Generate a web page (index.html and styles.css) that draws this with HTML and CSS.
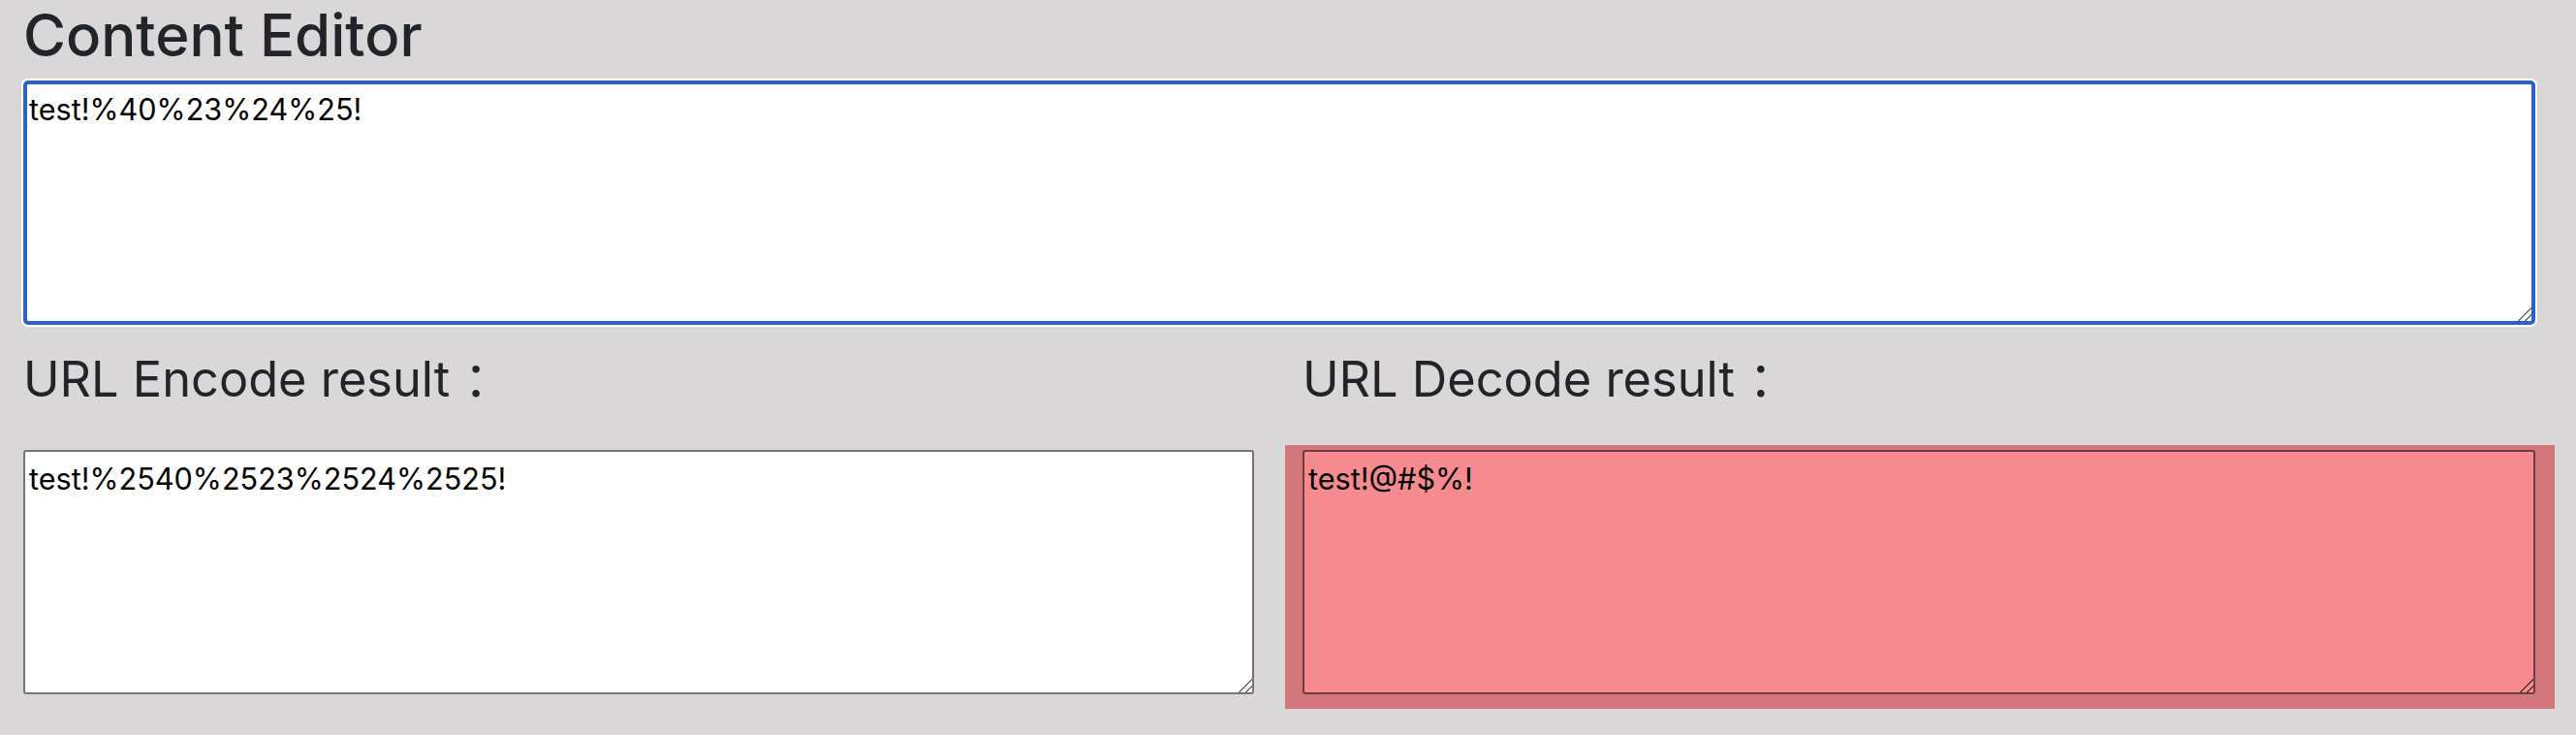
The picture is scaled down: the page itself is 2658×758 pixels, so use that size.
FILE: index.html
```html
<!DOCTYPE html>
<html lang="en">
<head>
<meta charset="utf-8">
<title>URL Encode / Decode</title>
<link rel="stylesheet" href="styles.css">
</head>
<body>
<main class="page">
  <h1 class="title">Content Editor</h1>
  <textarea class="editor editor-focus">test!%40%23%24%25!</textarea>
  <div class="results">
    <h2 class="result-title">URL Encode result ：</h2>
    <h2 class="result-title">URL Decode result ：</h2>
    <textarea class="editor">test!%2540%2523%2524%2525!</textarea>
    <div class="decode-box">
      <textarea class="editor editor-decode">test!@#$%!</textarea>
    </div>
  </div>
</main>
</body>
</html>
```

FILE: styles.css
```css
html, body {
  margin: 0;
  padding: 0;
  background: #d9d7d8;
}

.page {
  padding: 0 42px 0 24px;
  font-family: Inter, "Noto Sans CJK SC", sans-serif;
  color: #212529;
}

.title {
  margin: 0;
  font-size: 60px;
  line-height: 72px;
  font-weight: 500;
}

.editor {
  display: block;
  box-sizing: border-box;
  width: 100%;
  height: 252px;
  margin: 0;
  padding: 10px 4px 8px;
  border: 2px solid #767676;
  border-radius: 3px;
  background: #ffffff;
  color: #000000;
  font-family: Inter, "Noto Sans CJK SC", sans-serif;
  font-size: 30.6px;
  line-height: 1.2;
}

.editor::-webkit-scrollbar {
  width: 16px;
  height: 16px;
}

.editor::-webkit-resizer {
  background: linear-gradient(135deg,
    transparent 0 52%,
    #707070 52% 59%,
    transparent 59% 74%,
    #707070 74% 81%,
    transparent 81%);
}

.editor-focus {
  margin-top: 11px;
  border: 4px solid #2b62c8;
  border-radius: 5px;
  padding: 8px 2px 6px;
  box-shadow: 0 0 0 2px #ffffff;
  outline: none;
}

.results {
  display: grid;
  grid-template-columns: 1270px 1272px;
  column-gap: 50px;
  margin-top: 26px;
}

.result-title {
  margin: 0 0 42px 0;
  font-size: 50.5px;
  line-height: 1.2;
  font-weight: 400;
}

.decode-box {
  margin: -5px -20px 0 -18px;
  padding: 5px 20px 15px 18px;
  background: #d3767b;
}

.editor-decode {
  background: #f58b8f;
  border-color: #6e3c41;
}

.editor-decode::-webkit-resizer {
  background: linear-gradient(135deg,
    transparent 0 52%,
    #5e3337 52% 59%,
    transparent 59% 74%,
    #5e3337 74% 81%,
    transparent 81%);
}
```
